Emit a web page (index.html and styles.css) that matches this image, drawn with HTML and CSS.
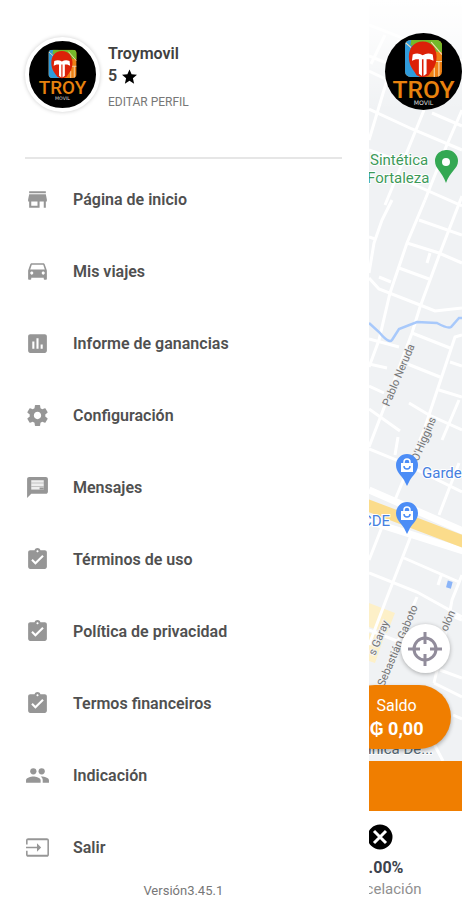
FILE: index.html
```html
<!DOCTYPE html>
<html lang="es">
<head>
  <meta charset="UTF-8">
  <meta name="viewport" content="width=device-width, initial-scale=1.0">
  <title>Troymovil</title>
  <link rel="stylesheet" href="styles.css">
</head>
<body>

<!-- Logo e iconos compartidos -->
<svg class="sprite" aria-hidden="true">
  <clipPath id="tile"><rect x="26" y="9" width="48" height="48" rx="7"/></clipPath>
  <g id="logo">
    <g clip-path="url(#tile)">
      <rect x="26" y="9" width="48" height="48" fill="#ee8014"/>
      <path d="M26 9h17L33 22v20l12 15H26z" fill="#2f9bdb"/>
      <path d="M34 9h40v16l-10-1-13-13-18 6z" fill="#74b82a"/>
      <path d="M26 12l8 7M60 12l14 16M65 37h9M64 45v12M70 37v20" stroke="#f6d9b0" stroke-width="1.5" fill="none"/>
    </g>
    <path d="M49 11c12 0 18 9 18 20 0 12-6 17-10 24-5 3-11 3-16 0-4-7-10-12-10-24 0-11 6-20 18-20z" fill="#dc2108"/>
    <path d="M36 28q7-3 13 1 6-4 13-1l1 8-5-2h-4v19l-4 3V34h-2v22l-4-3V34h-4l-5 2z" fill="#fff"/>
    <text class="logo-name" x="50" y="84">TROY</text>
    <text class="logo-sub" x="50" y="94">MOVIL</text>
  </g>
  <symbol id="icon-terms" viewBox="0 0 24 24">
    <path d="M19 3h-4.180C14.400 1.840 13.300 1 12 1s-2.400.84-2.820 2H5c-1.100 0-2 .9-2 2v14c0 1.100.9 2 2 2h14c1.100 0 2-.9 2-2V5c0-1.100-.9-2-2-2zm-7 0c.55 0 1 .45 1 1s-.45 1-1 1-1-.45-1-1 .45-1 1-1zm-2 14l-4-4 1.410-1.410L10 14.170l6.590-6.590L18 9l-8 8z"/>
  </symbol>
  <symbol id="pin-shop" viewBox="0 0 22 32">
    <path d="M11 0a11 11 0 0 0-11 11c0 7 5 10 8 15l3 6 3-6c3-5 8-8 8-15A11 11 0 0 0 11 0z" fill="#4c8df6"/>
    <path d="M5 9h12v9H5z" fill="#fff"/>
    <path d="M8 9V8a3 3 0 0 1 6 0v1" fill="none" stroke="#fff" stroke-width="1.5"/>
    <path d="M8 12a3 3 0 0 0 6 0" fill="none" stroke="#4c8df6" stroke-width="1.5"/>
  </symbol>
</svg>

<div class="app">
  <aside class="drawer">
    <header class="profile">
      <svg class="avatar" viewBox="-7 -6 114 114" role="img" aria-label="Troy Movil"><use href="#logo"/></svg>
      <div class="profile-info">
        <div class="name">Troymovil</div>
        <div class="rating">5
          <svg class="star" viewBox="2 2 20 19"><path d="M12 17.270L18.180 21l-1.640-7.030L22 9.240l-7.190-.61L12 2 9.190 8.630 2 9.240l5.460 4.730L5.820 21z"/></svg>
        </div>
        <a class="edit" href="#">EDITAR PERFIL</a>
      </div>
    </header>

    <nav class="menu">
      <a class="item" href="#">
        <svg class="icon" viewBox="0 0 24 24"><path d="M20 4H4v2h16V4zm1 10v-2l-1-5H4l-1 5v2h1v6h10v-6h4v6h2v-6h1zm-9 4H6v-4h6v4z"/></svg>
        Página de inicio
      </a>
      <a class="item" href="#">
        <svg class="icon" viewBox="0 0 24 24"><path d="M18.920 5.010C18.720 4.420 18.160 4 17.500 4h-11c-.66 0-1.210.42-1.420 1.010L3 11v8c0 .55.45 1 1 1h1c.55 0 1-.45 1-1v-1h12v1c0 .55.45 1 1 1h1c.55 0 1-.45 1-1v-8l-2.080-5.990zM6.500 15c-.83 0-1.500-.67-1.500-1.500S5.670 12 6.500 12s1.500.67 1.500 1.500S7.330 15 6.500 15zm11 0c-.83 0-1.500-.67-1.500-1.500s.67-1.500 1.500-1.500 1.500.67 1.500 1.500-.67 1.500-1.500 1.500zM5 10l1.500-4.500h11L19 10H5z"/></svg>
        Mis viajes
      </a>
      <a class="item" href="#">
        <svg class="icon" viewBox="0 0 24 24"><path d="M19 3H5c-1.100 0-2 .9-2 2v14c0 1.100.9 2 2 2h14c1.100 0 2-.9 2-2V5c0-1.100-.9-2-2-2zM9 17H7v-7h2v7zm4 0h-2V7h2v10zm4 0h-2v-4h2v4z"/></svg>
        Informe de ganancias
      </a>
      <a class="item" href="#">
        <svg class="icon" viewBox="0 0 24 24"><path d="M19.430 12.980c.04-.32.07-.64.07-.98s-.03-.66-.07-.98l2.110-1.650c.19-.15.24-.42.12-.64l-2-3.460c-.12-.22-.39-.3-.61-.22l-2.490 1c-.52-.4-1.080-.73-1.690-.98l-.38-2.650C14.460 2.180 14.250 2 14 2h-4c-.25 0-.46.18-.49.42l-.38 2.650c-.61.25-1.170.59-1.690.98l-2.490-1c-.23-.09-.49 0-.61.22l-2 3.460c-.13.22-.07.49.12.64l2.110 1.650c-.04.32-.07.65-.07.98s.03.66.07.98l-2.110 1.650c-.19.15-.24.42-.12.64l2 3.460c.12.22.39.3.61.22l2.490-1c.52.4 1.080.73 1.690.98l.38 2.650c.03.24.24.42.49.42h4c.25 0 .46-.18.49-.42l.38-2.650c.61-.25 1.170-.59 1.690-.98l2.490 1c.23.09.49 0 .61-.22l2-3.460c.12-.22.07-.49-.12-.64l-2.110-1.650zM12 15.500c-1.930 0-3.500-1.570-3.500-3.500s1.570-3.500 3.500-3.500 3.500 1.570 3.500 3.500-1.570 3.500-3.500 3.500z"/></svg>
        Configuración
      </a>
      <a class="item" href="#">
        <svg class="icon" viewBox="0 0 24 24"><path d="M20 2H4c-1.100 0-1.990.9-1.990 2L2 22l4-4h14c1.100 0 2-.9 2-2V4c0-1.100-.9-2-2-2z"/><path class="icon-light" d="M6 5h12v9H6z"/><path d="M6 7.500h12v.5H6zm0 3h12v.5H6zM14 12h4v2h-4z"/></svg>
        Mensajes
      </a>
      <a class="item" href="#">
        <svg class="icon"><use href="#icon-terms"/></svg>
        Términos de uso
      </a>
      <a class="item" href="#">
        <svg class="icon"><use href="#icon-terms"/></svg>
        Política de privacidad
      </a>
      <a class="item" href="#">
        <svg class="icon"><use href="#icon-terms"/></svg>
        Termos financeiros
      </a>
      <a class="item" href="#">
        <svg class="icon" viewBox="0 0 24 24"><circle cx="8" cy="8" r="3"/><circle cx="16" cy="8" r="3"/><path d="M8 13c-2.330 0-7 1.170-7 3.500V19h14v-2.500c0-2.330-4.670-3.500-7-3.500zm8 0c-.29 0-.62.02-.97.05 1.160.84 1.970 1.970 1.970 3.450V19h6v-2.500c0-2.330-4.670-3.500-7-3.500z"/></svg>
        Indicación
      </a>
      <a class="item" href="#">
        <svg class="icon" viewBox="0 0 24 24"><path d="M21 3.010H3c-1.100 0-2 .9-2 2V9h1.500V4.980h19v14.030h-19V15H1v4.010c0 1.100.9 1.980 2 1.980h18c1.100 0 2-.88 2-1.980v-14c0-1.110-.9-2-2-2zM11.500 16l4-4-4-4v3.200H1v1.600h10.500V16z"/></svg>
        Salir
      </a>
    </nav>

    <footer class="version">Versión3.45.1</footer>
  </aside>

  <main class="screen">
    <section class="map">
      <svg class="map-canvas" viewBox="0 0 94 761" preserveAspectRatio="xMinYMin slice">
        <defs>
          <linearGradient id="fade" x1="0" y1="0" x2="0" y2="1">
            <stop offset="0" stop-color="#fff"/>
            <stop offset="0.3" stop-color="#fff" stop-opacity="0.8"/>
            <stop offset="1" stop-color="#fff" stop-opacity="0"/>
          </linearGradient>
        </defs>
        <rect width="94" height="761" fill="#f0f2f4"/>
        <path d="M0 603l26 10-8 20-18-6zM0 633l15 4-9 26-6-2z" fill="#fdf0c8"/>
        <!-- calles -->
        <g fill="none" stroke="#fff" stroke-width="3">
          <path d="M30 40L0 140M55 110L40 147 16 205M93 110L77 147 56 200M16 35L2 64"/>
          <path d="M0 25l93 36M0 56l25 10M0 71l25 12M0 109l43 20 50 21M63 113l30 13M0 150l22 8M30 178l63 28"/>
          <path d="M23 200L13 220 5 243 0 273M56 200L38 243 21 293 10 340 0 367M93 196L71 253 51 307 43 333 18 400 0 447"/>
          <path d="M50 220l43 15M38 243l32 10 23 10M30 268l30 11M10 277l12 5M0 278l10 11 41 16 15 6 27-3M61 253l-3 10M0 237l6 2"/>
          <path d="M43 333l38 15M93 335l-7 2-21 63-10 30-29 70M0 339l30 8M0 364l18 4M36 363l35 14M81 362l12 4M70 390l23 7M0 386l15 7M90 400l-17 40"/>
          <path d="M40 403l20 12 33 15M0 409l31 22M29 437l-3 18M0 449l30 12 63 31M90 463l-20 52"/>
          <path d="M43 533L17 600 0 645M13 527L0 560M35 558l55 24M73 573l-4 12M0 573l48 19 45 25M93 575l-10 25-4 22-14 61M48 597L8 690M0 630l33 13M71 670l22 8M65 683l28 14M93 620l-14-6M64 742l10 19M84 715l9 4"/>
        </g>
        <path d="M0 490l94 41M0 521l94 30" stroke="#fff" stroke-width="7"/>
        <path d="M-2 505l97 37" stroke="#fbdc8b" stroke-width="12"/>
        <path d="M0 323l10 9q10 12 13 8l7-11 18-7 20 1q11 6 14 4l8-9h5" fill="none" stroke="#a8c9fb" stroke-width="2.5"/>
        <rect x="78" y="581" width="5" height="7" fill="#8ab4f8" transform="rotate(15 80 584)"/>
        <rect width="94" height="110" fill="url(#fade)"/>

        <g class="street">
          <text transform="translate(20 407) rotate(-67)">Pablo Neruda</text>
          <text transform="translate(49 462) rotate(-67)">O'Higgins</text>
          <text transform="translate(6 656) rotate(-67)">s Garay</text>
          <text transform="translate(15 687) rotate(-67)">Sebastián Gaboto</text>
          <text transform="translate(78 632) rotate(-67)">olón</text>
        </g>
        <g class="place green">
          <text x="1" y="165">Sintética</text>
          <text x="-2" y="183">Fortaleza</text>
        </g>
        <path d="M78 150a11 11 0 0 0-12 11c0 8 7 10 11 22 4-12 12-14 12-22a11 11 0 0 0-11-11z" fill="#34a853"/>
        <circle cx="77" cy="162" r="4" fill="#fff"/>
        <use href="#pin-shop" x="27" y="454" width="22" height="32"/>
        <use href="#pin-shop" x="27" y="502" width="22" height="32"/>
        <g class="place blue">
          <text x="53" y="478">Garde</text>
          <text x="-7" y="526">CDE</text>
        </g>
        <text class="place slate" x="-1" y="754">ínica De...</text>
      </svg>

      <svg class="brand" viewBox="0 0 100 100" role="img" aria-label="Troy Movil"><use href="#logo"/></svg>

      <button class="locate" type="button" aria-label="Mi ubicación">
        <svg viewBox="0 0 34 34"><circle cx="17" cy="17" r="11"/><path d="M17 0v12M17 22v12M0 17h12M22 17h12"/></svg>
      </button>

      <button class="balance" type="button">
        <span>Saldo</span>
        <strong>₲ 0,00</strong>
      </button>
    </section>

    <div class="bar"></div>

    <section class="stats">
      <svg class="cancel" viewBox="0 0 28 28"><circle cx="14" cy="14" r="14"/><path d="M8 8l12 12M20 8L8 20"/></svg>
      <strong class="stat-value">.00%</strong>
      <span class="stat-label">celación</span>
    </section>
  </main>
</div>

</body>
</html>
```
FILE: styles.css
```css
* {
  box-sizing: border-box;
}
body {
  margin: 0;
  background: #fff;
  font-family: Roboto, "Liberation Sans", sans-serif;
  color: #505050;
}
a {
  color: inherit;
  text-decoration: none;
}
button {
  border: none;
  padding: 0;
  font-family: inherit;
  cursor: pointer;
}
.sprite {
  position: absolute;
  width: 0;
  height: 0;
}
.app {
  display: flex;
  min-height: 100vh;
}

/* Menú lateral */
.drawer {
  flex: none;
  width: calc(80% - 1px);
  padding: 37px 27px 0 25px;
  background: #fff;
}
.profile {
  display: flex;
  gap: 8px;
  height: 122px;
  border-bottom: 2px solid #e6e6e6;
}
.avatar {
  width: 75px;
  height: 75px;
  border: 4px solid #fff;
  border-radius: 50%;
  background: #000;
  box-shadow: 0 0 4px rgba(0,0,0,0.2);
}
.profile-info {
  padding-top: 6px;
  line-height: 22px;
}
.name, .rating {
  font-size: 16px;
  font-weight: 600;
  color: #404040;
}
.rating {
  display: flex;
  align-items: center;
  gap: 5px;
}
.star {
  width: 15px;
  height: 15px;
  fill: #000;
}
.edit {
  display: block;
  margin-top: 4px;
  font-size: 12px;
  color: #777;
}
.logo-name {
  font: 500 32px Roboto, sans-serif;
  fill: #e8820e;
  text-anchor: middle;
}
.logo-sub {
  font: 8px "DejaVu Sans", sans-serif;
  fill: #ddd;
  text-anchor: middle;
}
.menu {
  display: flex;
  flex-direction: column;
  padding-top: 4px;
}
.item {
  display: flex;
  align-items: center;
  gap: 23px;
  height: 72px;
  font-size: 16px;
  font-weight: 600;
}
.icon {
  width: 25px;
  height: 25px;
  fill: #969696;
}
.icon-light {
  fill: #eee;
}
.version {
  font-size: 13px;
  line-height: 16px;
  text-align: center;
  color: #777;
}

/* Pantalla con el mapa */
.screen {
  flex: 1;
  min-width: 0;
  display: flex;
  flex-direction: column;
  overflow: hidden;
}
.map {
  position: relative;
  flex: 1;
  overflow: hidden;
}
.map-canvas {
  position: absolute;
  width: 100%;
  height: 100%;
}
.street {
  font-size: 11px;
  fill: #747474;
  stroke: #f0f2f4;
  stroke-width: 2px;
  paint-order: stroke;
}
.place {
  font-size: 15px;
  stroke: #fff;
  stroke-width: 2px;
  paint-order: stroke;
}
.green {
  fill: #3d9a59;
}
.blue {
  fill: #4680e0;
}
.slate {
  fill: #566b78;
}
.brand {
  position: absolute;
  top: 33px;
  left: 16px;
  width: 77px;
  height: 77px;
  border-radius: 50%;
  background: #000;
}
.locate {
  position: absolute;
  left: 32px;
  bottom: 88px;
  display: grid;
  place-items: center;
  width: 49px;
  height: 49px;
  border-radius: 50%;
  background: #fff;
  box-shadow: 0 1px 4px rgba(0,0,0,0.3);
}
.locate svg {
  width: 34px;
  height: 34px;
  fill: none;
  stroke: #918c9b;
  stroke-width: 3;
}
.balance {
  position: absolute;
  left: -26px;
  bottom: 12px;
  display: flex;
  flex-direction: column;
  align-items: center;
  justify-content: center;
  width: 108px;
  height: 64px;
  border-radius: 32px;
  background: #f07e00;
  color: #fff;
  font-size: 16px;
  line-height: 23px;
  box-shadow: 0 2px 4px rgba(0,0,0,0.3);
}
.balance strong {
  font-size: 18px;
}
.bar {
  height: 50px;
  background: #f07e00;
}
.stats {
  display: flex;
  flex-direction: column;
  height: 89px;
  padding-top: 12px;
}
.cancel {
  width: 28px;
  height: 28px;
  margin-left: -3px;
  stroke: #fff;
  stroke-width: 3;
}
.stat-value {
  margin-top: 6px;
  font-size: 16px;
  line-height: 22px;
  color: #3c424c;
}
.stat-label {
  margin-left: -3px;
  font-size: 15px;
  line-height: 20px;
  color: #909090;
}
```
